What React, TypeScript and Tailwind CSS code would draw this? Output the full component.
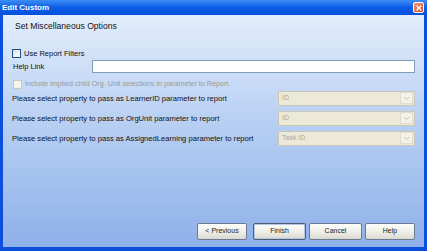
import { X } from 'lucide-react';

const font = { fontFamily: '"Liberation Sans", Arial, sans-serif' };

function Checkbox({ disabled }: { disabled?: boolean }) {
  return (
    <span
      className={`inline-block h-[9px] w-[9px] shrink-0 border ${
        disabled ? 'border-[#cac8bb] bg-[#f4f3ee]' : 'border-[#1c5180] bg-gradient-to-br from-[#dcdcd7] to-[#ffffff]'
      }`}
    />
  );
}

function DisabledSelect({ value }: { value: string }) {
  return (
    <div className="flex h-[15px] w-[137px] shrink-0 items-center border border-[#c9c7ba] bg-[#ece9d8]">
      <span className="flex-1 pl-[3px] text-[7px] text-[#aca899]">{value}</span>
      <span className="mr-px flex h-[12px] w-[13px] items-center justify-center border border-[#e0ddd0] bg-[#f3f1e8]">
        <svg width="7" height="5" viewBox="0 0 7 5">
          <path d="M1 1 L3.5 3.5 L6 1" stroke="#c6c3b4" strokeWidth="1" fill="none" />
        </svg>
      </span>
    </div>
  );
}

function Button({ label, width, primary }: { label: string; width: string; primary?: boolean }) {
  return (
    <button
      type="button"
      className={`flex h-[17px] items-center justify-center rounded-[2px] border bg-gradient-to-b from-[#fdfdfb] via-[#f0f0ea] to-[#d9d8d0] text-[7px] text-[#1a1a1a] ${
        primary ? 'border-[#4d5d73] shadow-[inset_0_0_0_1px_#b6c6e6]' : 'border-[#6b7a8f]'
      } ${width}`}
    >
      {label}
    </button>
  );
}

const rows = [
  { label: 'Please select property to pass as LearnerID parameter to report', value: 'ID' },
  { label: 'Please select property to pass as OrgUnit parameter to report', value: 'ID' },
  { label: 'Please select property to pass as AssignedLearning parameter to report', value: 'Task ID' },
];

export default function App() {
  return (
    <div className="flex h-[251px] w-[427px] flex-col overflow-hidden bg-[#0b4fdc]" style={font}>
      <div className="flex h-[15px] shrink-0 items-center justify-between bg-gradient-to-b from-[#3d8cf5] via-[#0a5de6] to-[#0550dc] pl-[2px] pr-[3px]">
        <span className="text-[8px] font-bold text-white">Edit Custom</span>
        <span className="flex h-[11px] w-[11px] items-center justify-center rounded-[2px] border border-white bg-gradient-to-br from-[#f39a73] to-[#d9461e]">
          <X className="h-[8px] w-[8px] text-white" strokeWidth={4} />
        </span>
      </div>
      <div className="mx-[3px] mb-[4px] flex flex-1 flex-col bg-gradient-to-b from-[#e3edfb] via-[#b4cdf2] to-[#8fb0e9] px-[9px] pb-[7px] text-[7.6px] text-[#111]">
        <div className="pl-[3px] pt-[5px] text-[8.6px]">Set Miscellaneous Options</div>
        <label className="mt-[15px] flex items-center gap-[3px]">
          <Checkbox />
          <span className="text-[7.5px]">Use Report Filters</span>
        </label>
        <div className="mt-[1px] flex items-center">
          <span className="w-[80px] pl-px text-[7.5px]">Help Link</span>
          <div className="h-[13px] flex-1 border border-[#7f9db9] bg-white" />
        </div>
        <label className="mt-[6px] flex items-center gap-[3px] pl-px">
          <Checkbox disabled />
          <span className="text-[7.2px] text-[#9a9a9a]">
            Include implied child Org. Unit selections in parameter to Report.
          </span>
        </label>
        <div className="mt-[1px] flex flex-col gap-[5px]">
          {rows.map((row) => (
            <div key={row.label} className="flex items-center">
              <span className="flex-1">{row.label}</span>
              <DisabledSelect value={row.value} />
            </div>
          ))}
        </div>
        <div className="mt-auto flex justify-end">
          <Button label="< Previous" width="w-[50px]" />
          <div className="w-[6px]" />
          <Button label="Finish" width="w-[53px]" primary />
          <div className="w-[3px]" />
          <Button label="Cancel" width="w-[53px]" />
          <div className="w-[3px]" />
          <Button label="Help" width="w-[50px]" />
        </div>
      </div>
    </div>
  );
}
